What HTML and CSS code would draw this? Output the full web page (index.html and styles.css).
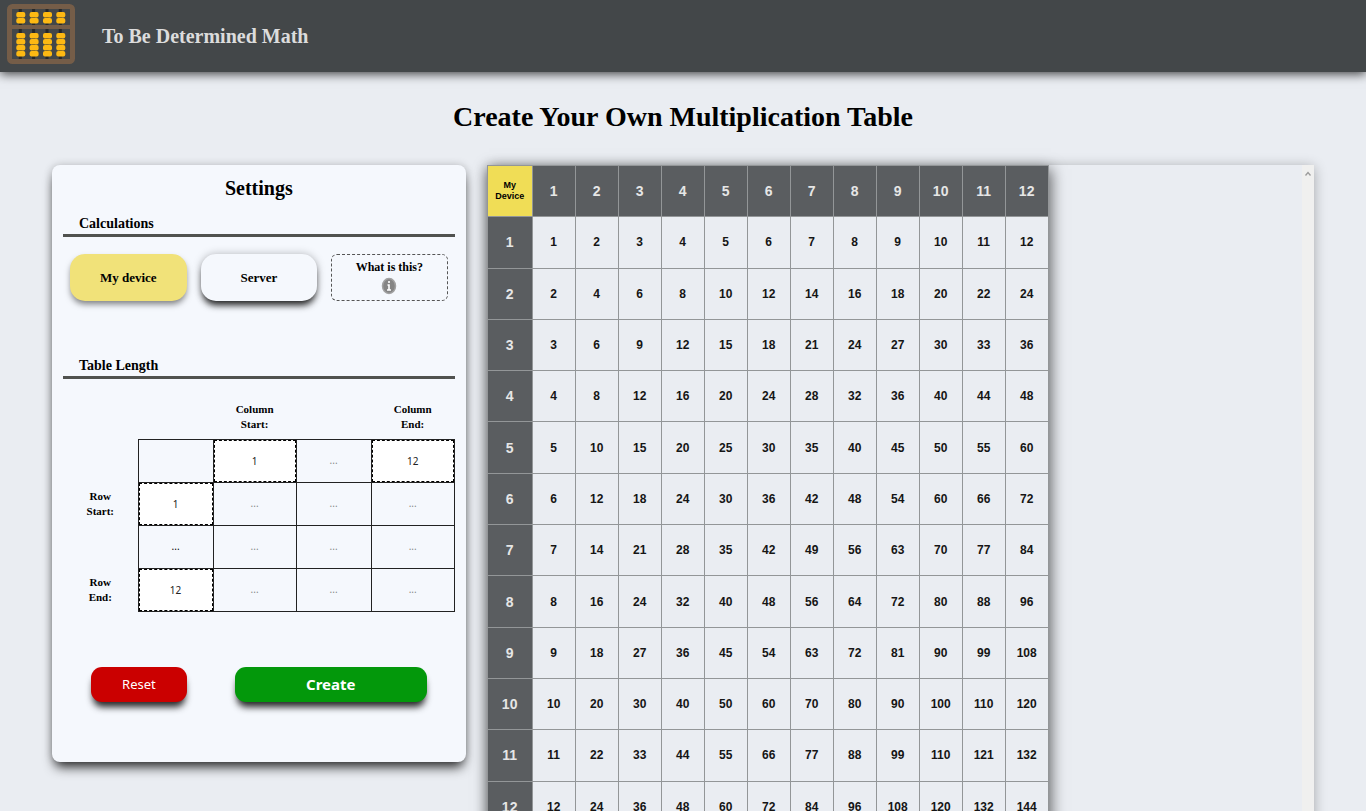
FILE: index.html
```html
<!DOCTYPE html>
<html lang="en">
<head>
<meta charset="utf-8">
<title>To Be Determined Math</title>
<link rel="stylesheet" href="styles.css">
</head>
<body>
<header class="site-header">
  <svg class="logo" viewBox="0 0 68 60" aria-hidden="true">
    <defs>
      <g id="rod">
        <path d="M0 4V58" stroke="#252729" stroke-width="3"/>
        <g fill="#fdb913">
          <rect x="-4" y="8" width="9" height="5.500" rx="2"/>
          <rect x="-4" y="14" width="9" height="5.500" rx="2"/>
          <rect x="-4" y="29" width="9" height="5.500" rx="2"/>
          <rect x="-4" y="35" width="9" height="5.500" rx="2"/>
          <rect x="-4" y="41" width="9" height="5.500" rx="2"/>
          <rect x="-4" y="47" width="9" height="5.500" rx="2"/>
        </g>
      </g>
    </defs>
    <use href="#rod" x="13.3"/><use href="#rod" x="26.6"/><use href="#rod" x="40"/><use href="#rod" x="53.3"/>
    <rect x="2.500" y="2.500" width="63" height="55" rx="3" fill="none" stroke="#755d48" stroke-width="5"/>
    <path d="M4 23H64" stroke="#755d48" stroke-width="4"/>
  </svg>
  <h2 class="site-name">To Be Determined Math</h2>
</header>
<main>
  <h1 class="page-title">Create Your Own Multiplication Table</h1>
  <div class="workspace">
    <form class="settings">
      <h2 class="settings-title">Settings</h2>
      <h3 class="section-title">Calculations</h3>
      <div class="modes">
        <button type="button" class="mode selected">My device</button>
        <button type="button" class="mode">Server</button>
        <button type="button" class="hint">What is this?
          <svg class="info" viewBox="0 0 16 18" aria-hidden="true">
            <ellipse cx="8" cy="9" rx="6.500" ry="7.500" fill="#858585" stroke="#a2a2a2" stroke-width="1.500"/>
            <path d="M8 4v2M6.500 8H8v5M6 13h4" stroke="#fff" stroke-width="1.600" fill="none"/>
          </svg>
        </button>
      </div>
      <h3 class="section-title">Table Length</h3>
      <table class="lengths">
        <colgroup><col class="c-a"><col class="c-a"><col class="c-b"><col class="c-a"><col class="c-b"></colgroup>
        <tr class="labels"><td></td><td></td><th><label for="col-start">Column<br>Start:</label></th><td></td><th><label for="col-end">Column<br>End:</label></th></tr>
        <tr><td></td><td class="cell"></td><td class="cell"><input id="col-start" value="1"></td><td class="cell">...</td><td class="cell"><input id="col-end" value="12"></td></tr>
        <tr><th><label for="row-start">Row<br>Start:</label></th><td class="cell"><input id="row-start" value="1"></td><td class="cell">...</td><td class="cell">...</td><td class="cell">...</td></tr>
        <tr><td></td><td class="cell strong">...</td><td class="cell">...</td><td class="cell">...</td><td class="cell">...</td></tr>
        <tr><th><label for="row-end">Row<br>End:</label></th><td class="cell"><input id="row-end" value="12"></td><td class="cell">...</td><td class="cell">...</td><td class="cell">...</td></tr>
      </table>
      <div class="actions">
        <button type="reset" class="action reset">Reset</button>
        <button type="button" class="action create">Create</button>
      </div>
    </form>
    <section class="results">
      <div class="results-body"><table class="product" id="product"></table></div>
      <div class="scrollbar">
        <svg class="arrow" viewBox="0 0 6 5" aria-hidden="true"><path d="M0.500 4.500L3 1.500L5.500 4.500" fill="none" stroke="#9a9a9a" stroke-width="1.300"/></svg>
      </div>
    </section>
  </div>
</main>
<script src="script.js"></script>
</body>
</html>
```
FILE: styles.css
```css
* { box-sizing: border-box; }
body {
  margin: 0;
  height: 100vh;
  overflow: hidden;
  background: #eaedf2;
  color: #000;
  font-family: "Liberation Serif", serif;
}
h1, h2, h3 { margin: 0; }
button { font-family: inherit; color: inherit; padding: 0; cursor: pointer; }
.site-header {
  display: flex;
  gap: 27px;
  height: 72px;
  padding: 4px 7px;
  background: #434749;
  box-shadow: 0 2px 10px rgba(0, 0, 0, .75);
}
.logo { width: 68px; height: 60px; }
.site-name { color: #dcdcdc; font-size: 20px; line-height: 64px; }
.page-title { margin: 27px 0 30px; text-align: center; font-size: 28px; line-height: 36px; }
.workspace {
  display: grid;
  grid-template-columns: 1fr 2fr;
  gap: 21px;
  align-items: start;
  padding: 0 52px;
}
.settings {
  padding: 11px 11px 60px;
  background: #f5f8fd;
  border-radius: 8px;
  box-shadow: 0 0 8px rgba(0, 0, 0, .2), 0 8px 12px -3px rgba(0, 0, 0, .8);
}
.settings-title { text-align: center; font-size: 20px; line-height: 24px; }
.section-title {
  margin-top: 13px;
  padding: 0 16px;
  border-bottom: 3px solid #50524f;
  font-size: 14px;
  line-height: 21px;
}
.modes {
  display: grid;
  grid-template-columns: repeat(3, 1fr);
  gap: 14px;
  margin-bottom: 54px;
  padding: 17px 7px 0;
}
.mode, .hint { height: 47px; background: #f5f8fd; font-weight: bold; }
.mode {
  border: 0;
  border-radius: 15px;
  font-size: 13px;
  box-shadow: 0 0 8px rgba(0, 0, 0, .25), 0 6px 7px -2px rgba(0, 0, 0, .85);
}
.selected { background: #f1e279; box-shadow: 0 4px 6px -1px rgba(0, 0, 0, .5); }
.hint {
  display: flex;
  flex-direction: column;
  align-items: center;
  justify-content: center;
  gap: 2px;
  border: 1px dashed #555;
  border-radius: 6px;
  font-size: 12px;
  line-height: 15px;
}
.info { width: 16px; height: 18px; }
.lengths {
  width: 100%;
  margin-top: 17px;
  border-collapse: collapse;
  table-layout: fixed;
  font-size: 11px;
  line-height: 15px;
  text-align: center;
}
.c-a { width: 19%; }
.c-b { width: 21%; }
.lengths tr { height: 43px; }
.lengths td, .lengths th { padding: 0; }
.lengths .labels th { padding-bottom: 1px; }
.lengths .cell {
  border: 1px solid #222;
  color: #888;
  font: 10px/15px "Noto Sans", sans-serif;
}
.lengths .strong { color: #000; }
.lengths input {
  display: block;
  width: 100%;
  height: 42px;
  padding: 0;
  border: 1px dashed #000;
  border-radius: 0;
  background: #fff;
  color: #222;
  text-align: center;
  font: 10px "Noto Sans", sans-serif;
}
.actions {
  display: grid;
  grid-template-columns: 1fr 2fr;
  gap: 48px;
  padding: 55px 28px 0;
}
.action {
  height: 35px;
  border: 0;
  border-radius: 11px;
  color: #fff;
  font-family: "Noto Sans", sans-serif;
  box-shadow: 0 7px 7px -2px rgba(0, 0, 0, .85);
}
.reset { background: #cb0000; font-size: 13px; }
.create { background: #03980b; font-size: 15px; font-weight: bold; }
.results {
  display: flex;
  box-shadow: 0 2px 12px rgba(0, 0, 0, .3);
  background: #eaedf2;
}
.results-body { flex: 1; }
.scrollbar { width: 12px; padding-top: 6px; background: #f0f0ef; text-align: center; line-height: 0; }
.arrow { width: 6px; height: 5px; }
.product {
  width: 562px;
  height: 668px;
  border-collapse: collapse;
  table-layout: fixed;
  box-shadow: 2px 4px 14px rgba(0, 0, 0, .6);
  font: bold 12px/16px "Liberation Sans", sans-serif;
  text-align: center;
  color: #151515;
}
.product tr { height: 51px; }
.product td, .product th { padding: 0; border: 1px solid #939698; }
.product th { background: #5a5d60; color: #e6e6e6; font-size: 14px; }
.product .corner { width: 45px; background: #f0dd56; color: #000; font-size: 9px; line-height: 11px; }
```
FILE: script.js
```js
const table = document.getElementById("product");
const last = 12;

function addCell(row, tag, text) {
  const cell = document.createElement(tag);
  cell.textContent = text;
  row.append(cell);
  return cell;
}

const head = table.insertRow();
addCell(head, "th", "").className = "corner";
head.firstChild.innerHTML = "My<br>Device";
for (let c = 1; c <= last; c++) addCell(head, "th", c);

for (let r = 1; r <= last; r++) {
  const row = table.insertRow();
  addCell(row, "th", r);
  for (let c = 1; c <= last; c++) addCell(row, "td", r * c);
}
```
